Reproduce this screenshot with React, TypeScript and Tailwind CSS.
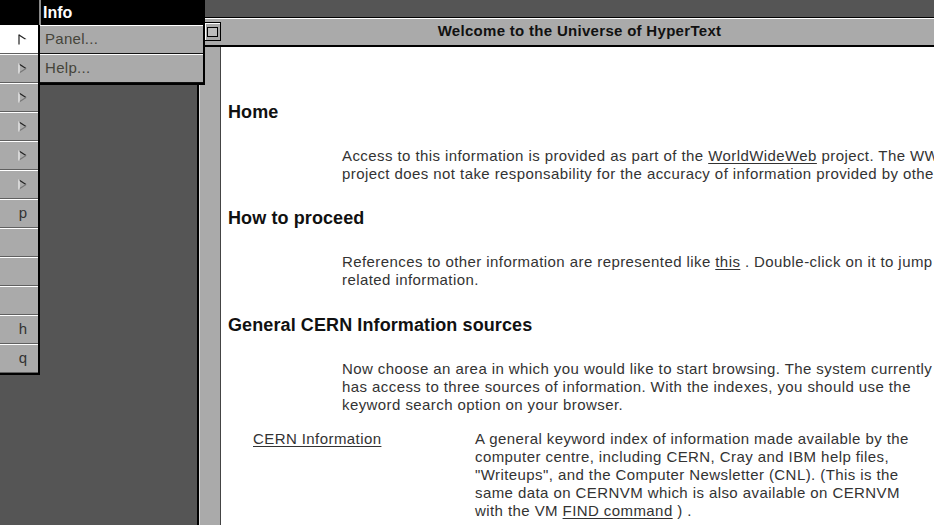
import React from "react"

const font = "font-['Liberation_Sans',Arial,Helvetica,sans-serif]"

function SubArrow({ onWhite = false }: { onWhite?: boolean }) {
  return (
    <svg width="9" height="11" viewBox="0 0 9 11" className="block">
      <path d="M1 1 L8 5.5" stroke="#222" strokeWidth="1.2" fill="none" />
      <path d="M1 10 L8 5.5" stroke={onWhite ? "#ffffff" : "#777"} strokeWidth="1.2" fill="none" />
      <path d="M1 0.5 V10.5" stroke={onWhite ? "#222" : "#f4f4f4"} strokeWidth="1.2" fill="none" />
    </svg>
  )
}

type MenuItem = { label?: string; arrow?: boolean; active?: boolean }

const mainItems: MenuItem[] = [
  { arrow: true, active: true },
  { arrow: true },
  { arrow: true },
  { arrow: true },
  { arrow: true },
  { arrow: true },
  { label: "p" },
  {},
  {},
  {},
  { label: "h" },
  { label: "q" },
]

function MainMenu() {
  return (
    <div className="absolute left-0 top-0 w-[40px] z-20">
      <div className="h-[25px] bg-black border-r border-[#8a8a8a]" />
      <div className="border-r-2 border-b-2 border-black">
        {mainItems.map((it, i) => (
          <div
            key={i}
            className={
              "h-[29px] flex items-center justify-end pr-[11px] border-t border-white border-b border-b-[#606060] text-[15px] text-[#333] " +
              (it.active ? "bg-white" : "bg-[#aaaaaa]")
            }
          >
            {it.arrow ? <SubArrow onWhite={it.active} /> : it.label}
          </div>
        ))}
      </div>
    </div>
  )
}

function InfoMenu() {
  return (
    <div className="absolute left-[40px] top-0 w-[165px] z-20">
      <div className="h-[25px] bg-black flex items-center pl-[2px] text-white font-bold text-[16px] border-l border-[#8a8a8a]">
        Info
      </div>
      <div className="border-r-2 border-b-2 border-black">
        {["Panel...", "Help..."].map((t) => (
          <div
            key={t}
            className="h-[29px] flex items-center pl-[5px] bg-[#aaaaaa] border-t border-white border-b border-b-[#111] text-[15px] text-[#45443a] tracking-[0.3px]"
          >
            {t}
          </div>
        ))}
      </div>
    </div>
  )
}

function Link({ children }: { children: React.ReactNode }) {
  return <span className="underline underline-offset-2 decoration-1">{children}</span>
}

function Heading({ children, className = "" }: { children: React.ReactNode; className?: string }) {
  return (
    <div className={"text-[18px] leading-[22px] font-bold tracking-[0.1px] text-[#111] pl-[7px] " + className}>
      {children}
    </div>
  )
}

function Para({ children, className = "" }: { children: React.ReactNode; className?: string }) {
  return (
    <div className={"ml-[121px] text-[15px] leading-[18px] tracking-[0.42px] text-[#333] " + className}>
      {children}
    </div>
  )
}

function BrowserWindow() {
  return (
    <div className="absolute left-[197px] top-[17px] right-0 bottom-0 flex flex-col border-l-2 border-black z-10">
      {/* title bar */}
      <div className="relative h-[30px] bg-[#aaaaaa] border-t border-black shadow-[inset_0_1px_0_#ffffff] border-b-2 border-b-black flex items-center justify-center">
        <div className="absolute left-[5px] top-[4px] w-[17px] h-[19px] border border-black bg-[#aaaaaa] shadow-[inset_1px_1px_0_#fff]">
          <div className="absolute left-[2px] top-[4px] w-[11px] h-[10px] border border-black bg-[#bdbdbd]" />
        </div>
        <div className="pl-[26px] text-[15px] font-bold tracking-[0.3px] text-[#111]">
          Welcome to the Universe of HyperText
        </div>
      </div>
      {/* body */}
      <div className="flex-1 flex min-h-0">
        <div className="w-[22px] bg-[#aaaaaa] border-l border-[#d8d8d8] border-r border-r-[#444]" />
        <div className="flex-1 bg-white overflow-hidden whitespace-nowrap pt-[54px]">
          <Heading>Home</Heading>
          <Para className="mt-[24px]">
            Access to this information is provided as part of the <Link>WorldWideWeb</Link> project. The WWW
            <br />
            project does not take responsability for the accuracy of information provided by others.
          </Para>
          <Heading className="mt-[24px]">How to proceed</Heading>
          <Para className="mt-[24px]">
            References to other information are represented like <Link>this</Link> . Double-click on it to jump to
            <br />
            related information.
          </Para>
          <Heading className="mt-[25px]">General CERN Information sources</Heading>
          <Para className="mt-[24px]">
            Now choose an area in which you would like to start browsing. The system currently
            <br />
            has access to three sources of information. With the indexes, you should use the
            <br />
            keyword search option on your browser.
          </Para>
          <div className="mt-[16px] flex text-[15px] leading-[18px] tracking-[0.42px] text-[#333]">
            <div className="w-[254px] pl-[32px]">
              <Link>CERN Information</Link>
            </div>
            <div>
              A general keyword index of information made available by the
              <br />
              computer centre, including CERN, Cray and IBM help files,
              <br />
              "Writeups", and the Computer Newsletter (CNL). (This is the
              <br />
              same data on CERNVM which is also available on CERNVM
              <br />
              with the VM <Link>FIND command</Link> ) .
            </div>
          </div>
        </div>
      </div>
    </div>
  )
}

export default function App() {
  return (
    <div className={"relative w-[934px] h-[525px] overflow-hidden bg-[#555555] " + font}>
      <BrowserWindow />
      <MainMenu />
      <InfoMenu />
    </div>
  )
}
